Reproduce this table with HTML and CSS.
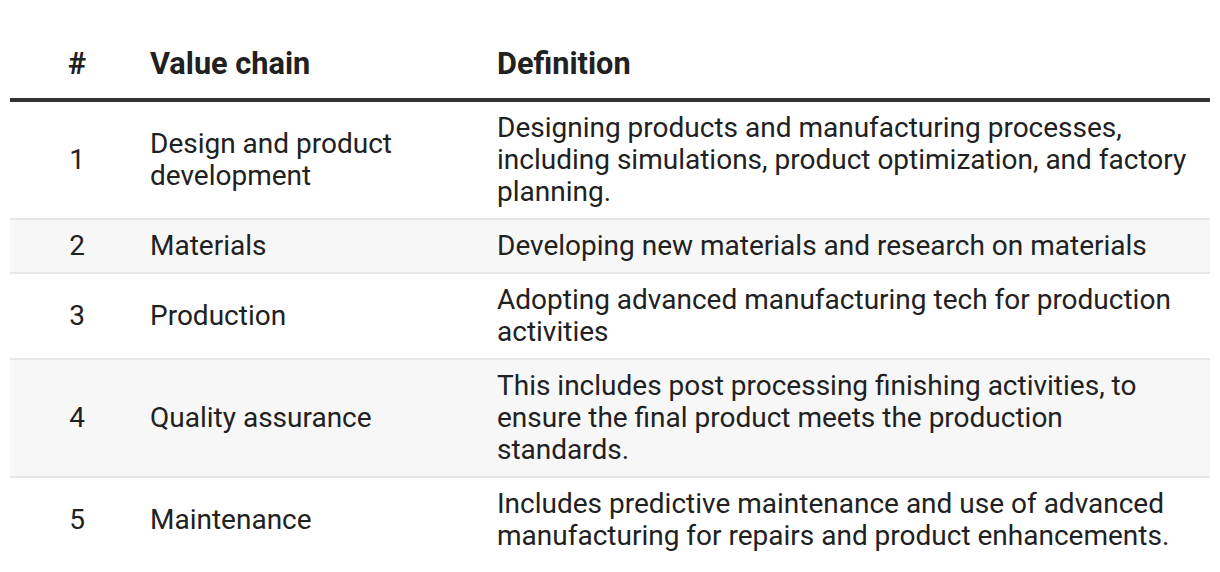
FILE: index.html
```html
<!DOCTYPE html>
<html lang="en">
<head>
<meta charset="utf-8">
<title>Value chain</title>
<link rel="stylesheet" href="styles.css">
</head>
<body>
<table class="vc-table">
  <colgroup>
    <col class="col-num">
    <col class="col-name">
    <col class="col-def">
  </colgroup>
  <thead>
    <tr>
      <th class="num">#</th>
      <th>Value chain</th>
      <th>Definition</th>
    </tr>
  </thead>
  <tbody>
    <tr>
      <td class="num">1</td>
      <td>Design and product development</td>
      <td>Designing products and manufacturing processes, including simulations, product optimization, and factory planning.</td>
    </tr>
    <tr class="alt">
      <td class="num">2</td>
      <td>Materials</td>
      <td>Developing new materials and research on materials</td>
    </tr>
    <tr>
      <td class="num">3</td>
      <td>Production</td>
      <td>Adopting advanced manufacturing tech for production activities</td>
    </tr>
    <tr class="alt">
      <td class="num">4</td>
      <td>Quality assurance</td>
      <td>This includes post processing finishing activities, to ensure the final product meets the production standards.</td>
    </tr>
    <tr>
      <td class="num">5</td>
      <td>Maintenance</td>
      <td>Includes predictive maintenance and use of advanced manufacturing for repairs and product enhancements.</td>
    </tr>
  </tbody>
</table>
</body>
</html>
```

FILE: styles.css
```css
html, body {
  margin: 0;
  padding: 0;
  background: #ffffff;
}

body {
  font-family: Roboto, "Liberation Sans", Arial, sans-serif;
  color: #212121;
}

.vc-table {
  margin: 30px 0 0 10px;
  width: 1200px;
  border-collapse: collapse;
  table-layout: fixed;
  font-size: 28px;
  line-height: 32px;
}

.col-num { width: 134px; }
.col-name { width: 347px; }
.col-def { width: 719px; }

.vc-table th {
  font-size: 30.7px;
  font-weight: 700;
  text-align: left;
  padding: 18px 12px 18px 6px;
  vertical-align: middle;
}

.vc-table thead tr {
  border-bottom: 4px solid #333333;
}

.vc-table td {
  padding: 10px 12px 10px 6px;
  vertical-align: middle;
  font-weight: 400;
}

.vc-table .num {
  text-align: center;
  padding-left: 0;
  padding-right: 0;
}

.vc-table tbody tr {
  border-bottom: 2px solid #e6e6e6;
}

.vc-table tbody tr:last-child {
  border-bottom: none;
}

.vc-table tbody tr.alt {
  background: #f7f7f7;
}
```
